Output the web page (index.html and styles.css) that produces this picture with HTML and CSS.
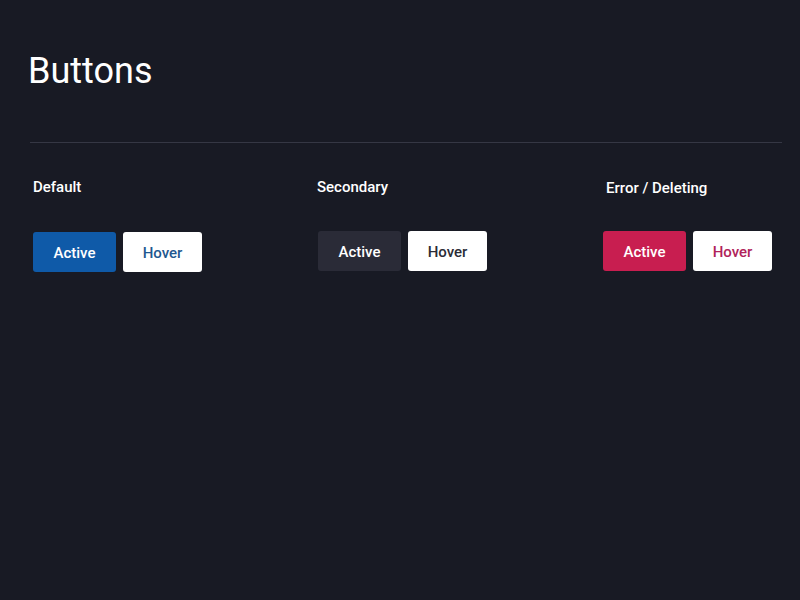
FILE: index.html
```html
<!DOCTYPE html>
<html>
<head>
<meta charset="utf-8">
<link rel="stylesheet" href="styles.css">
</head>
<body>
<main class="page">
  <h1 class="title">Buttons</h1>
  <hr class="divider">
  <section class="groups">
    <div class="group">
      <div class="label">Default</div>
      <div class="buttons">
        <button class="btn primary">Active</button>
        <button class="btn light primary-text">Hover</button>
      </div>
    </div>
    <div class="group group-2">
      <div class="label">Secondary</div>
      <div class="buttons">
        <button class="btn secondary">Active</button>
        <button class="btn light secondary-text">Hover</button>
      </div>
    </div>
    <div class="group group-3">
      <div class="label">Error / Deleting</div>
      <div class="buttons">
        <button class="btn error">Active</button>
        <button class="btn light error-text">Hover</button>
      </div>
    </div>
  </section>
</main>
</body>
</html>
```
FILE: styles.css
```css
html, body {
  margin: 0;
  padding: 0;
  background: #181a24;
  width: 800px;
  height: 600px;
  overflow: hidden;
}
body {
  font-family: Roboto, "Liberation Sans", sans-serif;
  color: #ffffff;
}
.page {
  padding: 48px 18px 0 28px;
}
.title {
  margin: 0;
  font-size: 36px;
  font-weight: 400;
  line-height: 46px;
  letter-spacing: 0;
}
.divider {
  margin: 48px 0 0 2px;
  border: 0;
  height: 1px;
  background: #353744;
}
.groups {
  display: grid;
  grid-template-columns: 284px 286px 1fr;
  padding-left: 5px;
  margin-top: 35px;
}
.label {
  font-size: 15px;
  font-weight: 500;
  line-height: 18px;
  height: 18px;
}
.group-3 .label {
  margin-left: 3px;
  margin-top: 1px;
}
.buttons {
  display: flex;
  gap: 7px;
  margin-top: 36px;
}
.group-2 .buttons {
  margin-top: 35px;
  margin-left: 1px;
}
.group-3 .buttons { margin-top: 34px; }
.btn {
  box-sizing: border-box;
  font-family: Roboto, "Liberation Sans", sans-serif;
  font-size: 15px;
  font-weight: 500;
  height: 40px;
  width: 83px;
  border: 0;
  border-radius: 3px;
  padding: 2px 0 0 0;
  color: #ffffff;
}
.btn.light {
  width: 79px;
  background: #ffffff;
}
.primary { background: #0f5aa8; }
.secondary { background: #2a2b37; }
.error { background: #c81e50; }
.primary-text { color: #1f5890; }
.secondary-text { color: #2b2c36; }
.error-text { color: #b0235a; }
```
